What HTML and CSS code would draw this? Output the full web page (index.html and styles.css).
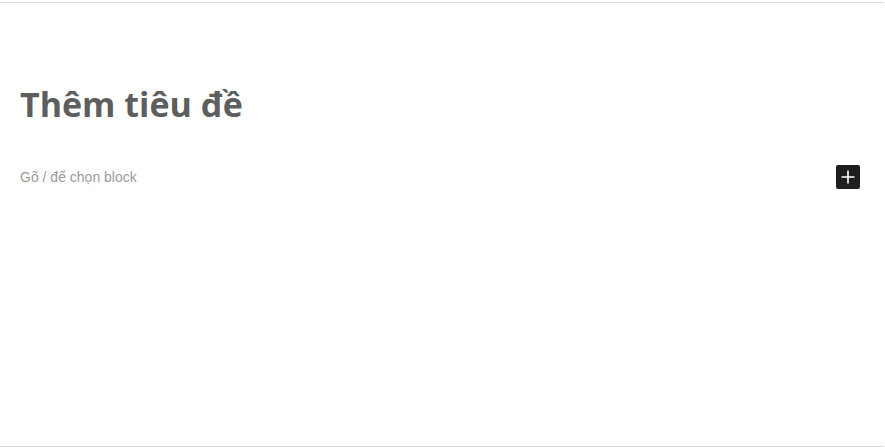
FILE: index.html
```html
<!DOCTYPE html>
<html lang="vi">
<head>
<meta charset="utf-8">
<link rel="stylesheet" href="styles.css">
</head>
<body>
<div class="frame">
  <div class="editor">
    <h1 class="title">Thêm tiêu đề</h1>
    <div class="block-row">
      <span class="placeholder">Gõ / để chọn block</span>
      <button class="add-btn" aria-label="Thêm block">
        <svg width="24" height="24" viewBox="0 0 24 24"><path d="M12 5.5v13M5.5 12h13" stroke="#fff" stroke-width="1.6" fill="none"/></svg>
      </button>
    </div>
  </div>
</div>
</body>
</html>
```
FILE: styles.css
```css
html, body { margin: 0; padding: 0; background: #fff; }
body { height: 447px; padding-top: 2px; box-sizing: border-box; }
.frame {
  height: 445px;
  width: 884px;
  box-sizing: border-box;
  border-top: 1px solid #dcdcdc;
  border-bottom: 1px solid #dcdcdc;
}
.editor { padding: 78px 24px 0 20px; }
.title {
  margin: 0;
  font-family: "Open Sans", "Noto Sans", sans-serif;
  font-weight: 700;
  font-size: 34px;
  line-height: 46px;
  color: #5e5e5e;
}
.block-row {
  margin-top: 38px;
  display: flex;
  align-items: center;
  justify-content: space-between;
}
.placeholder {
  font-family: "Liberation Sans", Arial, sans-serif;
  font-size: 14px;
  color: #9b9b9b;
}
.add-btn {
  width: 24px;
  height: 24px;
  padding: 0;
  border: none;
  border-radius: 2px;
  background: #1e1e1e;
  display: flex;
  align-items: center;
  justify-content: center;
}
```
